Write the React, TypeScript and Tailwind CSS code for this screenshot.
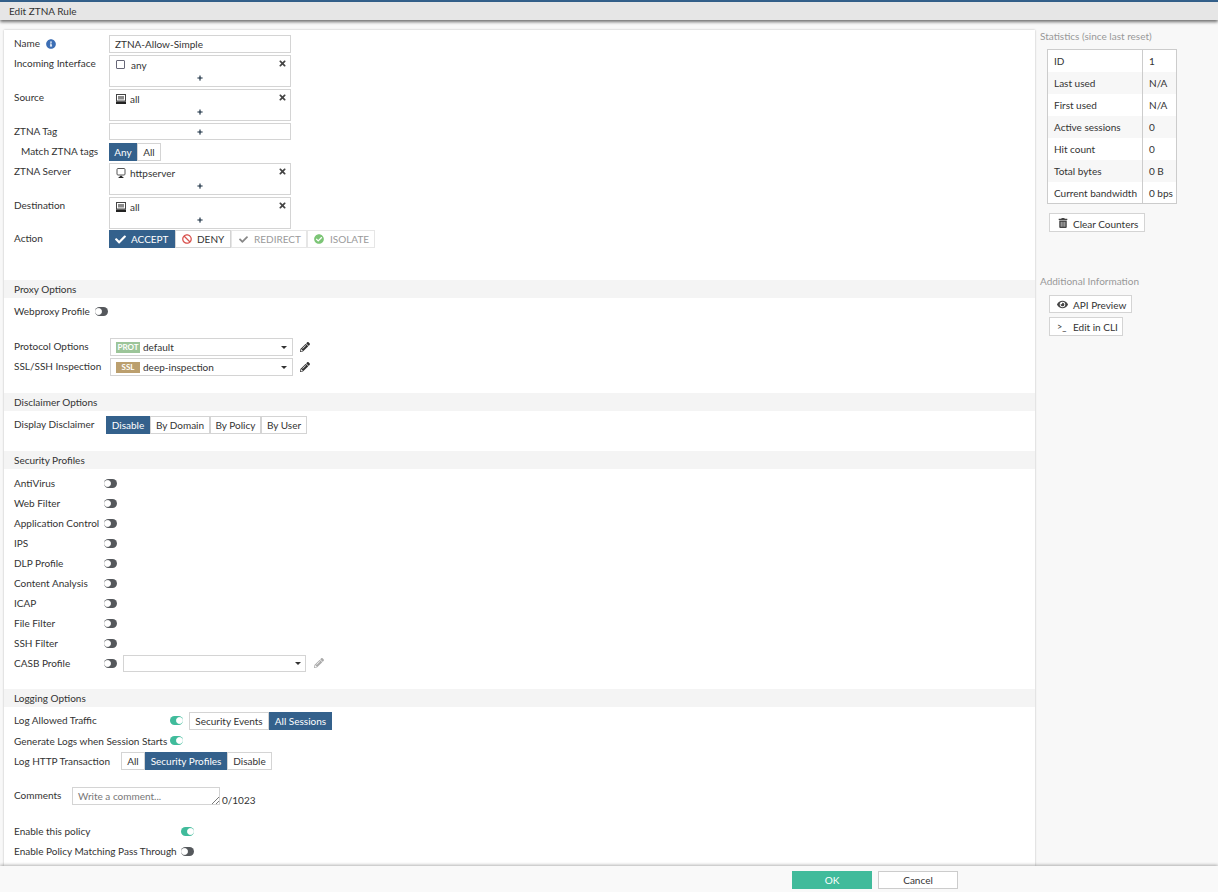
import type { ReactNode } from 'react'
import { FaBan, FaCheck, FaCheckCircle, FaEye, FaInfoCircle, FaPencilAlt, FaPlus, FaTimes, FaTrashAlt } from 'react-icons/fa'

const Toggle = ({ on = false }: { on?: boolean }) => (
  <span className={`flex h-[9px] w-[13px] shrink-0 items-center rounded-full ${on ? 'justify-end bg-[#40bb9b]' : 'justify-start bg-[#55585c]'}`}>
    <span className="h-[7px] w-[7px] rounded-full border border-white bg-white" />
  </span>
)

const Seg = ({ items, active, widths }: { items: string[]; active: string; widths: string[] }) => (
  <div className="flex h-[18px]">
    {items.map((item, index) => (
      <div
        key={item}
        className={`flex items-center justify-center border pt-px text-[10px] ${widths[index]} ${
          item === active ? 'border-[#34618c] bg-[#34618c] text-white' : 'border-[#d4d4d4] bg-white text-[#333]'
        }`}
      >
        {item}
      </div>
    ))}
  </div>
)

const Addr = ({ icon, name }: { icon: ReactNode; name: string }) => (
  <div className="flex h-8 w-[182px] flex-col border border-[#d4d4d4] bg-white">
    <div className="flex h-[17px] items-center pl-[6px] pr-[3px]">
      {icon}
      <span className="flex-1 pt-px text-[10px] text-[#333]">{name}</span>
      <FaTimes size={9} className="-mt-[2px] text-[#444]" />
    </div>
    <div className="flex flex-1 items-start justify-center">
      <FaPlus size={6} className="mt-[2px] text-[#12283c]" />
    </div>
  </div>
)

const Row = ({ label, children, className = '' }: { label: ReactNode; children: ReactNode; className?: string }) => (
  <div className={`flex ${className}`}>
    <div className="w-[95px] shrink-0 text-[10px] leading-[17px] text-[#333]">{label}</div>
    {children}
  </div>
)

const Section = ({ title, className = '' }: { title: string; className?: string }) => (
  <div className={`flex h-[18px] items-center bg-[#f4f4f4] pl-[10px] pt-px text-[10px] text-[#333] ${className}`}>{title}</div>
)

const HostIcon = () => (
  <svg width="10" height="10" viewBox="0 0 10 10" className="mr-[4px] shrink-0">
    <rect x="0.5" y="0.5" width="9" height="6.5" fill="#fff" stroke="#444" />
    <rect x="2" y="2" width="6" height="3.5" fill="#8a8a8a" />
    <rect x="0" y="7.5" width="10" height="2.5" fill="#222" />
  </svg>
)

const ServerIcon = () => (
  <svg width="10" height="10" viewBox="0 0 10 10" className="mr-[4px] shrink-0">
    <rect x="1" y="0.5" width="8" height="6.5" rx="1" fill="#fff" stroke="#555" />
    <path d="M2 10 L5 7.5 L8 10 Z" fill="#222" />
  </svg>
)

const Select = ({ tag, tagColor, value }: { tag: string; tagColor: string; value: string }) => (
  <div className="flex h-[18px] w-[183px] items-center border border-[#d4d4d4] bg-white px-[5px]">
    <span className={`mr-[3px] flex h-[11px] w-6 items-center justify-center text-[8px] font-bold text-white ${tagColor}`}>{tag}</span>
    <span className="flex-1 pt-px text-[10px] text-[#333]">{value}</span>
    <span className="h-0 w-0 border-x-[3px] border-t-[3px] border-x-transparent border-t-[#333]" />
  </div>
)

const profiles = ['AntiVirus', 'Web Filter', 'Application Control', 'IPS', 'DLP Profile', 'Content Analysis', 'ICAP', 'File Filter', 'SSH Filter']

const stats = [
  ['ID', '1'],
  ['Last used', 'N/A'],
  ['First used', 'N/A'],
  ['Active sessions', '0'],
  ['Hit count', '0'],
  ['Total bytes', '0 B'],
  ['Current bandwidth', '0 bps'],
]

export default function App() {
  return (
    <div className="flex h-[892px] flex-col overflow-hidden bg-[#f8f8f8] font-['Lato',sans-serif] text-[#333]">
      <div className="h-[2px] bg-[#34618c]" />
      <div className="z-10 flex h-[18px] items-center bg-[#e6e6e6] pl-[9px] pt-px text-[10px] shadow-[0_2px_3px_rgba(0,0,0,0.55)]">Edit ZTNA Rule</div>
      <div className="flex min-h-0 flex-1 pt-[10px]">
        <div className="ml-1 flex w-[1031px] flex-col bg-white pt-[5px] shadow-[0_0_2px_rgba(0,0,0,0.25)]">
          <div className="flex flex-col gap-[2px] pl-[10px]">
            <Row label={<span className="flex items-center gap-[6px]">Name <FaInfoCircle size={10} className="text-[#3c6eb4]" /></span>}>
              <div className="flex h-[18px] w-[182px] items-center border border-[#d4d4d4] pl-[5px] pt-px text-[10px]">ZTNA-Allow-Simple</div>
            </Row>
            <Row label="Incoming Interface">
              <Addr icon={<span className="mr-[6px] h-[9px] w-[9px] rounded-[1px] border border-[#667]" />} name="any" />
            </Row>
            <Row label="Source">
              <Addr icon={<HostIcon />} name="all" />
            </Row>
            <Row label="ZTNA Tag">
              <div className="flex h-[17px] w-[182px] items-center justify-center border border-[#d4d4d4]">
                <FaPlus size={6} className="text-[#12283c]" />
              </div>
            </Row>
            <Row label={<span className="pl-[7px]">Match ZTNA tags</span>} className="mt-[1px]">
              <Seg items={['Any', 'All']} active="Any" widths={['w-7', 'w-6']} />
            </Row>
            <Row label="ZTNA Server">
              <Addr icon={<ServerIcon />} name="httpserver" />
            </Row>
            <Row label="Destination">
              <Addr icon={<HostIcon />} name="all" />
            </Row>
            <Row label="Action" className="-mt-[1px]">
              <div className="flex h-[18px] text-[10px]">
                <div className="flex w-[66px] items-center gap-[5px] bg-[#34618c] pl-[6px] text-white"><FaCheck size={11} /><span className="pt-px">ACCEPT</span></div>
                <div className="flex w-[56px] items-center gap-[5px] border border-[#d4d4d4] pl-[6px]"><FaBan size={10} className="text-[#d9534f]" /><span className="pt-px">DENY</span></div>
                <div className="flex w-[76px] items-center gap-[6px] border border-[#e6e6e6] pl-[7px] text-[#9a9a9a]"><FaCheck size={9} className="text-[#888]" /><span className="pt-px">REDIRECT</span></div>
                <div className="flex w-[68px] items-center gap-[6px] border border-[#e6e6e6] pl-[6px] text-[#9a9a9a]"><FaCheckCircle size={10} className="text-[#7cc576]" /><span className="pt-px">ISOLATE</span></div>
              </div>
            </Row>
          </div>

          <Section title="Proxy Options" className="mt-8" />
          <div className="mt-[5px] flex items-center pl-[10px] text-[10px] leading-[17px]">
            <span className="w-[81px] shrink-0">Webproxy Profile</span>
            <Toggle />
          </div>
          <div className="mt-[18px] flex flex-col gap-[2px] pl-[10px]">
            <Row label="Protocol Options" className="items-start">
              <div className="ml-[1px] flex items-center gap-[7px]">
                <Select tag="PROT" tagColor="bg-[#9cc599]" value="default" />
                <FaPencilAlt size={10} className="text-[#333]" />
              </div>
            </Row>
            <Row label="SSL/SSH Inspection" className="items-start">
              <div className="ml-[1px] flex items-center gap-[7px]">
                <Select tag="SSL" tagColor="bg-[#bb9f6e]" value="deep-inspection" />
                <FaPencilAlt size={10} className="text-[#333]" />
              </div>
            </Row>
          </div>

          <Section title="Disclaimer Options" className="mt-[17px]" />
          <div className="mt-[5px] flex pl-[10px]">
            <div className="w-[92px] shrink-0 text-[10px] leading-[17px]">Display Disclaimer</div>
            <Seg items={['Disable', 'By Domain', 'By Policy', 'By User']} active="Disable" widths={['w-[44px]', 'w-[60px]', 'w-[51px]', 'w-[46px]']} />
          </div>

          <Section title="Security Profiles" className="mt-[17px]" />
          <div className="mt-[4px] flex flex-col pl-[10px]">
            {profiles.map((name) => (
              <div key={name} className="flex h-5 items-center text-[10px]">
                <span className="w-[90px] shrink-0 whitespace-nowrap">{name}</span>
                <Toggle />
              </div>
            ))}
            <div className="flex h-5 items-center text-[10px]">
              <span className="w-[90px] shrink-0">CASB Profile</span>
              <Toggle />
              <div className="ml-[6px] flex h-[17px] w-[183px] items-center justify-end border border-[#d4d4d4] pr-[4px]">
                <span className="h-0 w-0 border-x-[3px] border-t-[3px] border-x-transparent border-t-[#333]" />
              </div>
              <FaPencilAlt size={10} className="ml-2 text-[#aaa]" />
            </div>
          </div>

          <Section title="Logging Options" className="mt-[16px]" />
          <div className="mt-[5px] flex h-[17px] items-center pl-[10px] text-[10px]">
            <span className="w-[156px] shrink-0">Log Allowed Traffic</span>
            <Toggle on />
            <div className="ml-[6px]">
              <Seg items={['Security Events', 'All Sessions']} active="All Sessions" widths={['w-[80px]', 'w-[63px]']} />
            </div>
          </div>
          <div className="mt-[3px] flex h-[17px] items-center pl-[10px] text-[10px]">
            <span className="w-[156px] shrink-0 whitespace-nowrap pt-px">Generate Logs when Session Starts</span>
            <Toggle on />
          </div>
          <div className="mt-[3px] flex items-center pl-[10px] text-[10px]">
            <span className="w-[107px] shrink-0">Log HTTP Transaction</span>
            <Seg items={['All', 'Security Profiles', 'Disable']} active="Security Profiles" widths={['w-[24px]', 'w-[82px]', 'w-[45px]']} />
          </div>
          <div className="mt-[17px] flex h-[18px] pl-[10px] text-[10px]">
            <span className="w-[58px] shrink-0 leading-[17px]">Comments</span>
            <div className="relative flex h-[18px] w-[148px] items-center border border-[#d4d4d4] pl-[5px] pt-px text-[#777]">
              Write a comment...
              <svg width="8" height="8" viewBox="0 0 8 8" className="absolute bottom-0 right-0">
                <path d="M1 8 L8 1 M5 8 L8 5" stroke="#555" strokeWidth="0.8" />
              </svg>
            </div>
            <span className="ml-[2px] mt-[6px]">0/1023</span>
          </div>
          <div className="mt-[16px] flex h-5 items-center pl-[10px] text-[10px]">
            <span className="w-[167px] shrink-0">Enable this policy</span>
            <Toggle on />
          </div>
          <div className="flex h-5 items-center pl-[10px] text-[10px]">
            <span className="w-[167px] shrink-0 whitespace-nowrap">Enable Policy Matching Pass Through</span>
            <Toggle />
          </div>
        </div>

        <div className="w-[183px] pl-[5px] text-[10px]">
          <div className="-mt-px text-[#999]">Statistics (since last reset)</div>
          <table className="ml-[7px] mt-[5px] border border-[#ccc] bg-white">
            <tbody>
              {stats.map(([k, v], index) => (
                <tr key={k} className={`h-[22px] ${index % 2 ? 'bg-[#f7f7f7]' : 'bg-white'}`}>
                  <td className="w-[95px] whitespace-nowrap border-r border-[#ccc] pl-[6px] pt-[2px]">{k}</td>
                  <td className="w-[34px] pl-[6px] pt-[2px]">{v}</td>
                </tr>
              ))}
            </tbody>
          </table>
          <div className="ml-[9px] mt-[9px] flex h-[19px] w-[96px] items-center gap-[5px] whitespace-nowrap border border-[#d4d4d4] bg-white pl-[7px]">
            <span className="flex w-[11px] justify-center"><FaTrashAlt size={10} className="text-[#444]" /></span><span className="pt-[3px]">Clear Counters</span>
          </div>
          <div className="mt-[42px] text-[#999]">Additional Information</div>
          <div className="ml-[9px] mt-[6px] flex h-[18px] w-[83px] items-center gap-[5px] whitespace-nowrap border border-[#d4d4d4] bg-white pl-[7px]">
            <FaEye size={11} className="text-[#444]" /><span className="pt-[2px]">API Preview</span>
          </div>
          <div className="ml-[9px] mt-[4px] flex h-[19px] w-[74px] items-center gap-[5px] whitespace-nowrap border border-[#d4d4d4] bg-white pl-[7px]">
            <span className="w-[11px] text-[9px] leading-none">&gt;_</span><span className="pt-px">Edit in CLI</span>
          </div>
        </div>
      </div>
      <div className="z-10 flex h-[26px] shrink-0 items-center bg-[#f9f9f9] pl-[792px] pt-[2px] text-[10px] shadow-[0_-1px_3px_rgba(0,0,0,0.3)]">
        <div className="flex h-[18px] w-20 items-center justify-center bg-[#40bb9b] text-white">OK</div>
        <div className="ml-[6px] flex h-[18px] w-20 items-center justify-center border border-[#ccc] bg-white">Cancel</div>
      </div>
    </div>
  )
}
